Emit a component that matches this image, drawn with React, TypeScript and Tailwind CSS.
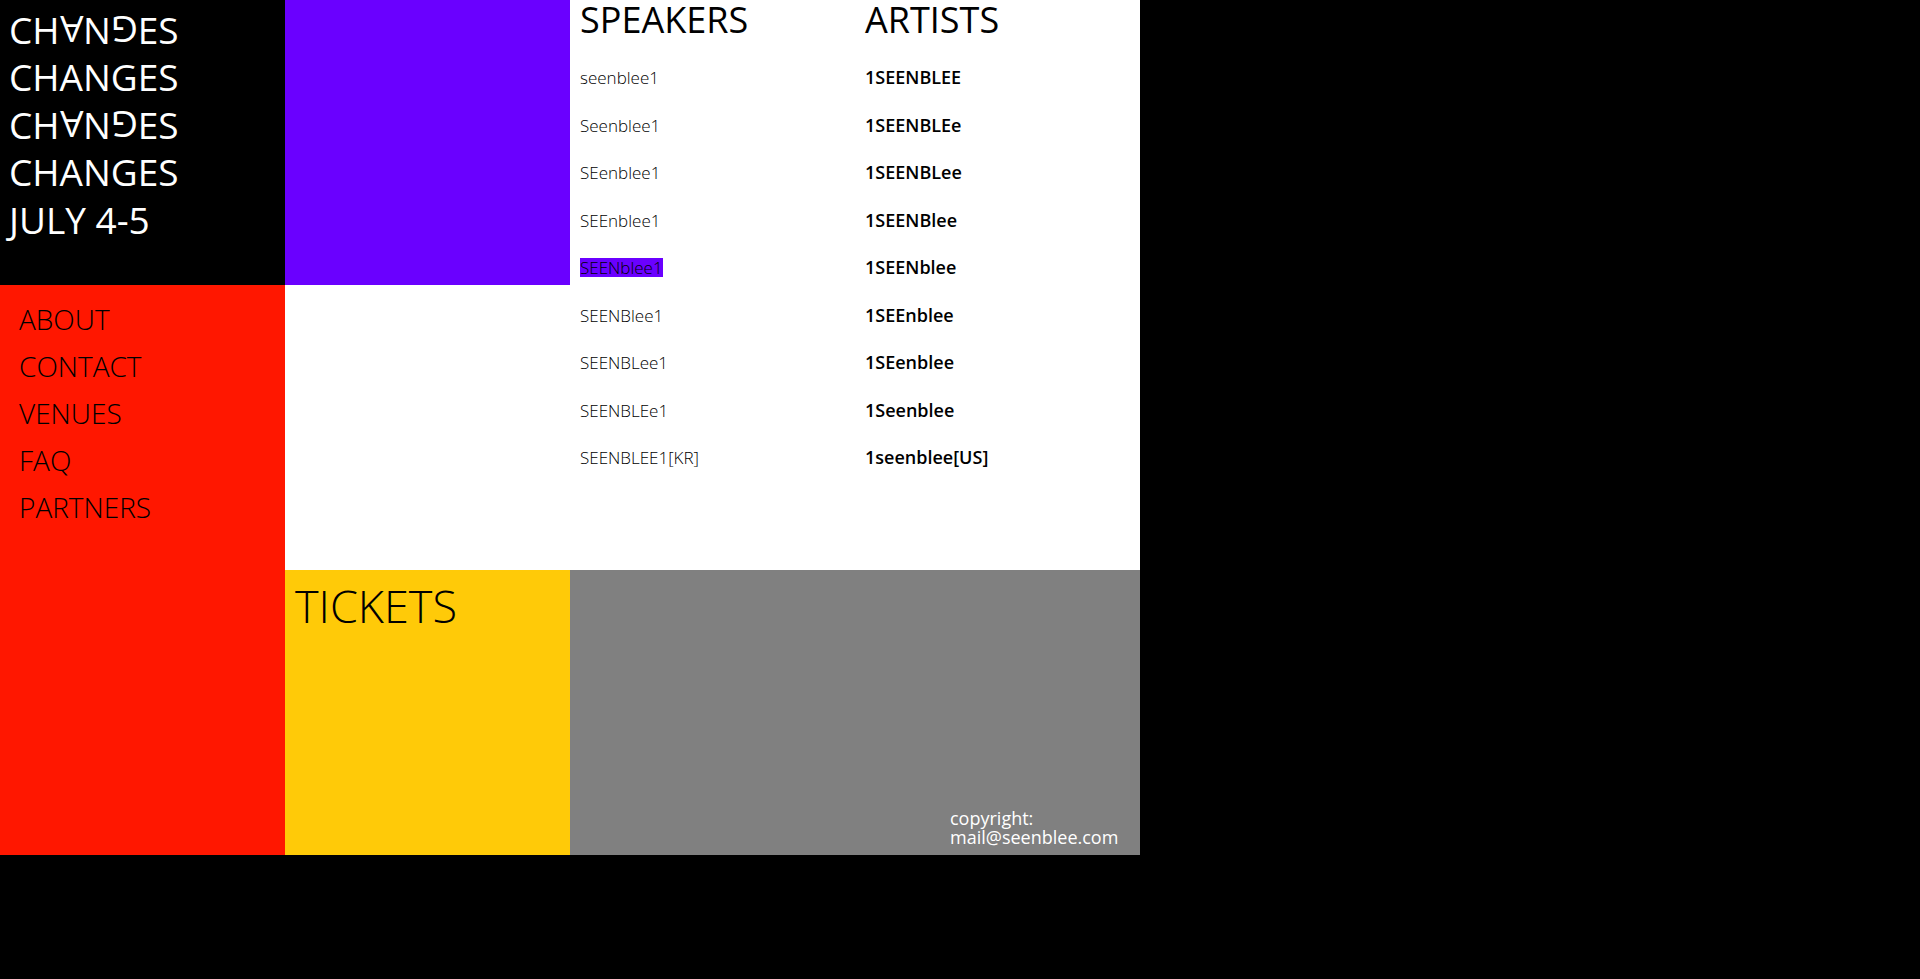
import React from "react";

const titleLines = [true, false, true, false];
const pages = ["ABOUT", "CONTACT", "VENUES", "FAQ", "PARTNERS"];
const speakers = [
  "seenblee1",
  "Seenblee1",
  "SEenblee1",
  "SEEnblee1",
  "SEENblee1",
  "SEENBlee1",
  "SEENBLee1",
  "SEENBLEe1",
  "SEENBLEE1[KR]",
];
const artists = [
  "1SEENBLEE",
  "1SEENBLEe",
  "1SEENBLee",
  "1SEENBlee",
  "1SEENblee",
  "1SEEnblee",
  "1SEenblee",
  "1Seenblee",
  "1seenblee[US]",
];

function Title({ flipped }: { flipped: boolean }) {
  if (!flipped) return <span>CHANGES</span>;
  return (
    <span>
      CH<span className="inline-block rotate-180">A</span>N
      <span className="inline-block rotate-180">G</span>ES
    </span>
  );
}

function People({
  heading,
  headingClass,
  names,
  nameClass,
  active,
}: {
  heading: string;
  headingClass: string;
  names: string[];
  nameClass: string;
  active?: string;
}) {
  return (
    <section className="row-span-2 grid grid-rows-12 bg-white pl-[10px]">
      <h2 className={`leading-10 ${headingClass}`}>{heading}</h2>
      <ul className="row-span-11 grid grid-rows-11">
        {names.map((name) => (
          <li key={name} className="flex items-end pb-2">
            <a
              href="#"
              className={`leading-[19px] ${nameClass} ${name === active ? "bg-[#6a00ff]" : ""}`}
            >
              {name}
            </a>
          </li>
        ))}
      </ul>
    </section>
  );
}

export default function App() {
  return (
    <div className="min-h-screen bg-black font-['Open_Sans','Noto_Sans',sans-serif] text-black">
      <main className="grid w-full max-w-[1140px] auto-rows-[285px] grid-cols-4">
        <h1 className="grid grid-rows-6 pl-[9px] text-[37px] leading-9 font-normal text-white">
          {titleLines.map((flipped, i) => (
            <span key={i} className="flex items-end">
              <Title flipped={flipped} />
            </span>
          ))}
          <span className="flex items-end">JULY 4-5</span>
        </h1>
        <div className="bg-[#6a00ff]" />
        <People
          heading="SPEAKERS"
          headingClass="text-[36px] font-normal"
          names={speakers}
          nameClass="text-[17px] font-light"
          active="SEENblee1"
        />
        <People
          heading="ARTISTS"
          headingClass="text-[36px] font-normal"
          names={artists}
          nameClass="text-[18px] font-semibold"
        />
        <nav className="row-span-2 bg-[#ff1700] pt-[10px] pl-[19px]">
          <ul>
            {pages.map((page) => (
              <li key={page} className="flex h-[47px] items-center">
                <a href="#" className="text-[28px] leading-9 font-light">
                  {page}
                </a>
              </li>
            ))}
          </ul>
        </nav>
        <div className="bg-white" />
        <section className="bg-[#ffca08] pt-2 pl-[10px]">
          <a href="#" className="text-[45px] leading-[56px] font-light">
            TICKETS
          </a>
        </section>
        <footer className="col-span-2 flex items-end justify-end bg-[#808080] pb-2 text-[18px] leading-[19px] text-white">
          <p className="w-1/3">
            copyright:
            <br />
            mail@seenblee.com
          </p>
        </footer>
      </main>
    </div>
  );
}
